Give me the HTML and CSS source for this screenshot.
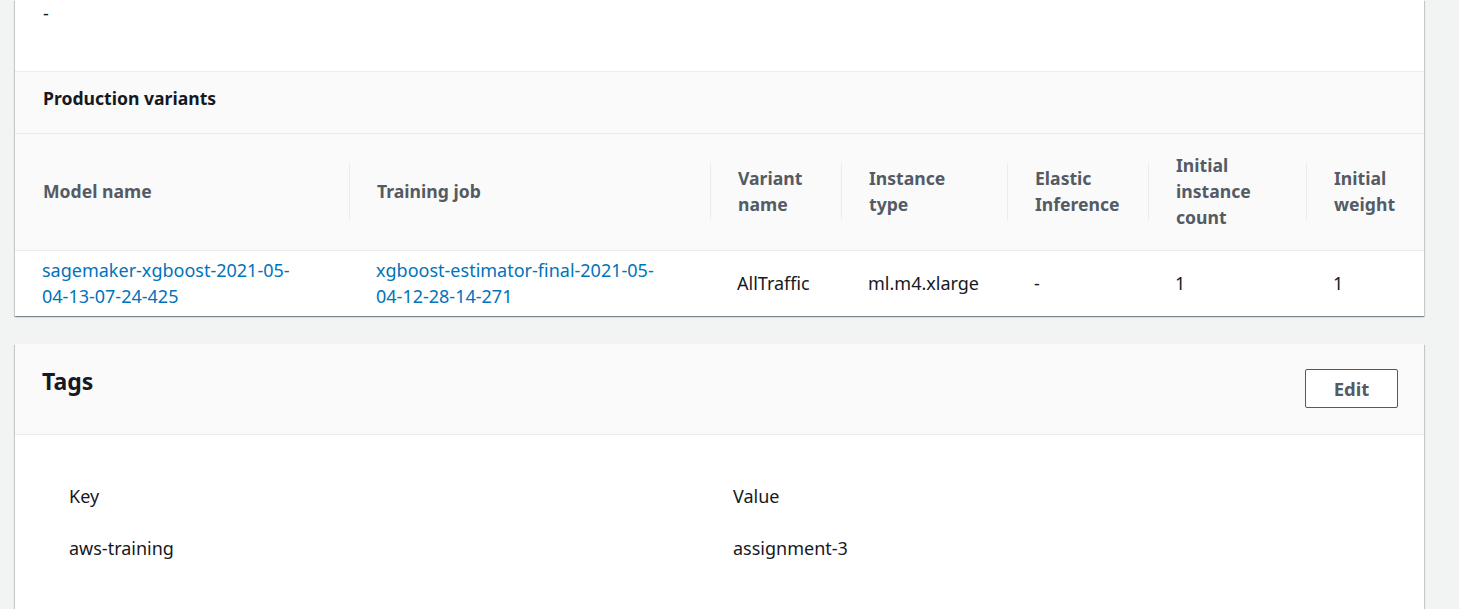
FILE: index.html
```html
<!DOCTYPE html>
<html lang="en">
<head>
<meta charset="utf-8">
<title>Endpoint configuration</title>
<link rel="stylesheet" href="styles.css">
</head>
<body>
<main class="page">
  <section class="card card-top">
    <div class="summary">
      <div class="value">-</div>
    </div>
    <div class="sub-header">
      <h3 class="sub-title">Production variants</h3>
    </div>
    <table class="variants">
      <colgroup>
        <col style="width:334px">
        <col style="width:361px">
        <col style="width:131px">
        <col style="width:166px">
        <col style="width:141px">
        <col style="width:158px">
        <col>
      </colgroup>
      <thead>
        <tr>
          <th>Model name</th>
          <th class="div">Training job</th>
          <th class="div">Variant name</th>
          <th class="div">Instance type</th>
          <th class="div">Elastic Inference</th>
          <th class="div">Initial instance count</th>
          <th class="div">Initial weight</th>
        </tr>
      </thead>
      <tbody>
        <tr>
          <td class="link-cell"><a href="#">sagemaker-xgboost-2021-05-04-13-07-24-425</a></td>
          <td class="link-cell"><a href="#">xgboost-estimator-final-2021-05-04-12-28-14-271</a></td>
          <td>AllTraffic</td>
          <td>ml.m4.xlarge</td>
          <td>-</td>
          <td>1</td>
          <td>1</td>
        </tr>
      </tbody>
    </table>
  </section>

  <section class="card card-tags">
    <div class="card-header">
      <h2 class="card-title">Tags</h2>
      <button class="btn" type="button">Edit</button>
    </div>
    <div class="tags-body">
      <div class="tags-grid">
        <div class="tag-cell">Key</div>
        <div class="tag-cell">Value</div>
        <div class="tag-cell">aws-training</div>
        <div class="tag-cell">assignment-3</div>
      </div>
    </div>
  </section>
</main>
</body>
</html>
```

FILE: styles.css
```css
* { box-sizing: border-box; }

html, body {
  margin: 0;
  padding: 0;
  background: #f2f3f3;
  font-family: "Noto Sans", "Open Sans", "Liberation Sans", sans-serif;
  color: #16191f;
  font-size: 18px;
  line-height: 26px;
}

.page {
  display: flex;
  flex-direction: column;
  gap: 28px;
  padding: 0 35px 0 15px;
  width: 1459px;
}

.card {
  background: #ffffff;
  box-shadow: 0 1px 1px 0 rgba(0, 28, 36, 0.3),
              1px 1px 1px 0 rgba(0, 28, 36, 0.15),
              -1px 1px 1px 0 rgba(0, 28, 36, 0.15);
}

.summary {
  padding: 0 28px 45px 28px;
  border-bottom: 1px solid #eaeded;
}

.value {
  line-height: 26px;
  color: #16191f;
}

.sub-header {
  background: #fafafa;
  padding: 13px 28px 22px 28px;
  border-bottom: 1px solid #eaeded;
}

.sub-title {
  margin: 0;
  font-size: 17.6px;
  line-height: 26px;
  font-weight: 700;
  color: #16191f;
}

.variants {
  width: 100%;
  border-collapse: collapse;
  table-layout: fixed;
}

.variants th {
  position: relative;
  background: #fafafa;
  color: #545b64;
  font-size: 17.6px;
  font-weight: 700;
  text-align: left;
  vertical-align: middle;
  padding: 18px 20px 19px 28px;
  height: 116px;
  border-bottom: 1px solid #eaeded;
}

.variants th.div::before {
  content: "";
  position: absolute;
  left: 0;
  top: 29px;
  bottom: 30px;
  border-left: 1px solid #eaeded;
}

.variants td {
  padding: 6px 4px 7px 27px;
  vertical-align: middle;
  color: #16191f;
  white-space: nowrap;
}

.variants td.link-cell {
  padding-right: 47px;
  white-space: normal;
  word-break: break-word;
}

.variants td a {
  color: #0073bb;
  text-decoration: none;
}

.card-header {
  display: flex;
  justify-content: space-between;
  align-items: flex-start;
  background: #fafafa;
  padding: 25px 26px 26px 27px;
  border-bottom: 1px solid #eaeded;
}

.card-title {
  margin: 0;
  font-size: 23px;
  line-height: 24px;
  font-weight: 700;
  color: #16191f;
}

.btn {
  width: 93px;
  height: 39px;
  background: #ffffff;
  border: 1px solid #545b64;
  border-radius: 2px;
  font-family: inherit;
  font-size: 18.5px;
  font-weight: 700;
  color: #545b64;
  padding: 0;
}

.tags-body {
  padding: 48px 28px 80px 54px;
}

.tags-grid {
  display: grid;
  grid-template-columns: 664px 1fr;
  row-gap: 26px;
}

.tag-cell {
  line-height: 26px;
  color: #16191f;
}
```
